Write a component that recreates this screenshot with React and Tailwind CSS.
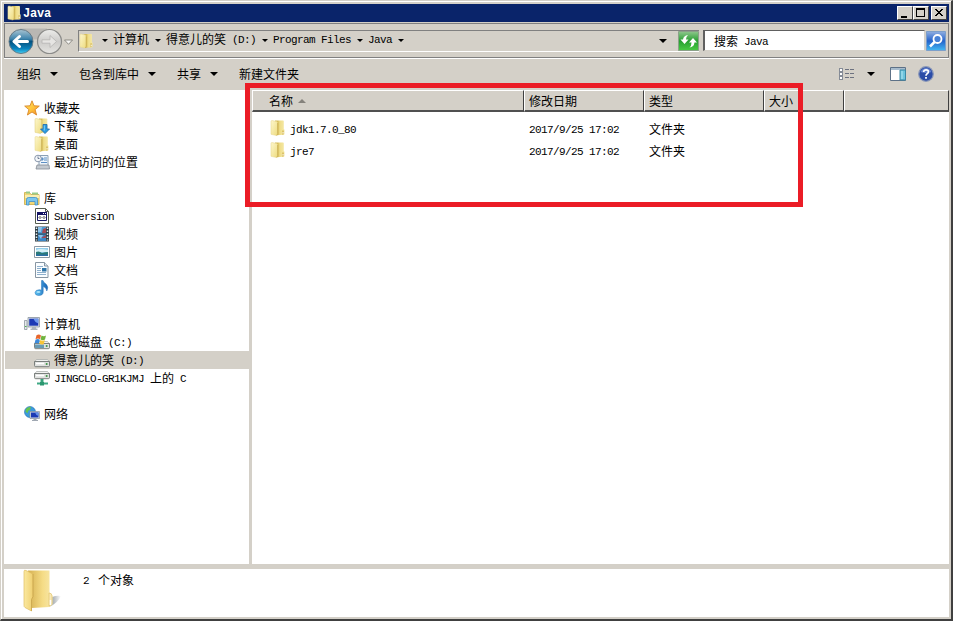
import clsx from "clsx"

// Latin runs use a fixed 6px advance, CJK glyphs use 12px
const Label = ({ children, className }) => (
  <span className={clsx("whitespace-pre", className)}>
    {children.split(/([\x20-\x7e]+)/).filter(Boolean).map((part, i) =>
      /^[\x20-\x7e]/.test(part) ? (
        <span
          key={i}
          className="relative -top-px leading-none font-['Liberation_Mono',monospace] text-[11px] tracking-[-0.6px]"
        >
          {part}
        </span>
      ) : (
        <span key={i}>{part}</span>
      )
    )}
  </span>
)

const Arrow = ({ className = "w-[7px] h-1" }) => (
  <svg viewBox="0 0 8 4" preserveAspectRatio="none" className={clsx("shrink-0", className)}>
    <path d="M0 0h8L4 4z" fill="#000" />
  </svg>
)

const Folder = ({ className = "w-4 h-4" }) => (
  <svg viewBox="0 0 16 16" className={clsx("shrink-0", className)}>
    <defs>
      <linearGradient id="folderFront" x1="0" x2="1" y2="1">
        <stop offset="0" stopColor="#fdf7cd" />
        <stop offset="1" stopColor="#eedc80" />
      </linearGradient>
      <linearGradient id="folderBack" x1="0" x2="1">
        <stop offset="0" stopColor="#d6bd5a" />
        <stop offset="0.3" stopColor="#d6bd5a" />
        <stop offset="0.5" stopColor="#efdd88" />
        <stop offset="1" stopColor="#f5e9a8" />
      </linearGradient>
    </defs>
    <path d="M5 .5h8q.8 0 .8.8V9l.7.8v4.400l-1 .6-7 .4z" fill="url(#folderBack)" />
    <path d="M1 1.500Q1 .5 2 .5l4.500 1q1 .3 1 1.500v11l-1 1.500L1 14.300z" fill="url(#folderFront)" stroke="#e6d58b" strokeWidth="0.5" />
    <path d="M7.700 3v10.500l-.9 2" fill="none" stroke="#c4a74a" strokeWidth="0.7" />
    <path d="M12 10.500h2v3.700l-2 .5z" fill="#dcc368" />
    <path d="M12.600 12h.9v1.500h-.9z" fill="#fff" />
  </svg>
)

const BigFolder = () => (
  <svg viewBox="0 0 40 44" className="w-10 h-11 shrink-0">
    <defs>
      <linearGradient id="bigFront" x1="0" x2="1">
        <stop offset="0" stopColor="#fbe9a0" />
        <stop offset="1" stopColor="#efcf70" />
      </linearGradient>
      <linearGradient id="bigBack" x1="0" x2="1">
        <stop offset="0" stopColor="#d5b050" />
        <stop offset="0.6" stopColor="#f5dc86" />
        <stop offset="1" stopColor="#f8e8ab" />
      </linearGradient>
      <linearGradient id="bigShadow" x1="0" x2="1">
        <stop offset="0" stopColor="#7f878c" />
        <stop offset="0.6" stopColor="#b3b9bd" />
        <stop offset="1" stopColor="#fff" />
      </linearGradient>
    </defs>
    <path d="M20 38L29 28q5-2 9-1-3 7-12 11z" fill="url(#bigShadow)" />
    <path d="M5 1.500h21.500v22l3 3v9l-3 2.500-18 1z" fill="url(#bigBack)" />
    <path d="M1 2.500q0-2 2-1l6 3q1 .5 1 2V28l-1.500 3v11L2 38.500q-1-.5-1-2z" fill="url(#bigFront)" stroke="#dfbd62" strokeWidth="0.7" />
    <path d="M10 5v22.500l-1.500 3V42" fill="none" stroke="#c9a64e" strokeWidth="0.8" />
    <path d="M26 24q3 0 3 3v8l-3 2z" fill="#f9e9b6" stroke="#dfc067" strokeWidth="0.6" />
    <path d="M27.500 31v5" stroke="#fff" strokeWidth="1.500" />
  </svg>
)

const Star = () => (
  <svg viewBox="0 0 16 16" className="w-4 h-4">
    <defs>
      <linearGradient id="star" x1="0" x2="1" y2="1">
        <stop offset="0" stopColor="#ffe45e" />
        <stop offset="0.5" stopColor="#ffc53d" />
        <stop offset="1" stopColor="#f58b25" />
      </linearGradient>
    </defs>
    <path d="M8 .8l2 5 5.300.3-4.200 3.500 1.500 5.400L8 12l-4.600 3 1.500-5.400L.7 6.100 6 5.800z" fill="url(#star)" stroke="#d8872b" strokeWidth="0.9" />
  </svg>
)

const Download = () => (
  <svg viewBox="0 0 16 16" className="w-4 h-4">
    <path d="M5 .5h7.500q.8 0 .8.8V14l-7 1z" fill="url(#folderBack)" />
    <path d="M1 1.500Q1 .5 2 .5l4.500 1q1 .3 1 1.500v11l-1 1.500L1 14.300z" fill="url(#folderFront)" stroke="#dfcb77" strokeWidth="0.5" />
    <path d="M9 6.500h4V11h2.500L11 15.600 6.500 11H9z" fill="#2c9be0" stroke="#1c68a9" strokeWidth="0.8" />
    <path d="M10.300 7.500v5" stroke="#83d2f7" />
  </svg>
)

const Recent = () => (
  <svg viewBox="0 0 16 16" className="w-4 h-4">
    <path d="M5 1.500h9v10H5z" fill="#eef5fb" stroke="#8aa0b5" />
    <path d="M7 4h2v2H7zM10 4h3M10 6h3M7 8.500h6" fill="#5d9dd6" stroke="#5d8fc4" />
    <path d="M3 11h12l.5 4H2z" fill="#c3c9cf" stroke="#848c94" strokeWidth="0.8" />
    <circle cx="4" cy="4.500" r="3.300" fill="#f4f7fa" stroke="#8a98ac" />
    <path d="M4 2.500v2h1.500" fill="none" stroke="#4f617d" strokeWidth="0.8" />
  </svg>
)

const Library = () => (
  <svg viewBox="0 0 16 16" className="w-4 h-4">
    <path d="M.5 2.500h5l1.500 2H15v10H.5z" fill="#f1d978" stroke="#d5b75c" />
    <path d="M2 1.500h4v2H2zM8 2.500h6v2H8z" fill="#99ca88" />
    <path d="M1 5h14v3H1z" fill="#faeeb0" />
    <path d="M2.500 15V9.500q0-2 2-2h7q2 0 2 2V15H11v-3.500H5V15z" fill="#7cc6ee" stroke="#3d8fc9" strokeWidth="0.8" />
  </svg>
)

const Subversion = () => (
  <svg viewBox="0 0 16 16" className="w-4 h-4">
    <path d="M1.500.5h10l3 3v12h-13z" fill="#fff" stroke="#555d4e" />
    <path d="M11.500.5v3h3" fill="none" stroke="#555" />
    <path d="M3.500 4.500h9v8h-9z" fill="#fff" stroke="#151563" />
    <path d="M3 4h10v3H3z" fill="#151563" />
    <path d="M9 5h1v1H9zM11 5h1v1h-1z" fill="#fff" />
    <path d="M5 9.500l1-1 1 1-1 1zM9 9.500l1-1 1 1-1 1z" fill="none" stroke="#222" strokeWidth="0.9" />
  </svg>
)

const Video = () => (
  <svg viewBox="0 0 16 16" className="w-4 h-4">
    <path d="M1 .5h14v15H1z" fill="#2e3c45" />
    <path d="M4 1h8v6.500H4z" fill="#4c9dd6" />
    <path d="M4 8.500h8V15H4z" fill="#3d87c6" />
    <path d="M4 1h4l-1 5H4zM4 9h5l-2 4z" fill="#8fc4ea" />
    <path d="M9 3l3-1v5H8zM7 12l5-3v3z" fill="#a44a55" />
    <path d="M2.500 1.500v13M13.500 1.500v13" stroke="#e4eff1" strokeWidth="1.500" strokeDasharray="1.500 1.500" />
  </svg>
)

const Picture = () => (
  <svg viewBox="0 0 16 16" className="w-4 h-4">
    <path d="M.5 2.500h15v11H.5z" fill="#fff" stroke="#8b98a3" />
    <path d="M2 4h12v8H2z" fill="#91cdec" />
    <path d="M2 6q4-2 12 0v2H2z" fill="#d5eff5" />
    <path d="M2 8q3-1.500 6 1 3-1 6-1v4H2z" fill="#2b7b79" />
    <path d="M2 10.500h12V12H2z" fill="#2c6fa5" />
  </svg>
)

const Document = () => (
  <svg viewBox="0 0 16 16" className="w-4 h-4">
    <path d="M1.500.5h9l3.500 3.500v11.500H1.500z" fill="#fafdff" stroke="#8896a3" />
    <path d="M10.500.5V4H14" fill="#dbe5ee" stroke="#8896a3" />
    <path d="M3 4.500h6M3 6.500h4M3 8.500h4M3 10.500h9M3 12.500h9" stroke="#8fb0cd" />
    <path d="M8 6h4.500v3.500H8z" fill="#2f75a8" />
  </svg>
)

const Music = () => (
  <svg viewBox="0 0 16 16" className="w-4 h-4">
    <defs>
      <linearGradient id="note" x1="0" x2="1">
        <stop offset="0" stopColor="#5fc4f3" />
        <stop offset="1" stopColor="#1762b4" />
      </linearGradient>
    </defs>
    <path d="M7.500.5H9q.5 2 3 3.500 3 3 .8 7-.3-3.500-3.600-4.500V12q0 3.500-4.700 3.500Q1 15.200 1 12.700q.4-3 4.500-3 1.200 0 2 .5z" fill="url(#note)" stroke="#2271b8" strokeWidth="0.5" />
    <ellipse cx="4.500" cy="12" rx="2" ry="1.100" fill="#a6e1fa" />
  </svg>
)

const Computer = () => (
  <svg viewBox="0 0 16 16" className="w-4 h-4">
    <path d="M.5 4.500h2.500v9H.5z" fill="#e5e9ec" stroke="#8d979e" strokeWidth="0.8" />
    <path d="M1 10h1.500v1H1z" fill="#4bb34b" />
    <path d="M4 1.500h11.500v9.500H4z" fill="#d9dfe6" stroke="#8a949e" strokeWidth="0.8" />
    <path d="M5.200 2.700h9.100v7H5.200z" fill="#1c39b5" />
    <path d="M9.500 2.700h4.800v4.500q-3-.5-4.800-4.500z" fill="#6e99ed" />
    <path d="M8 11h4v1.500h1.500V14h-7v-1.500H8z" fill="#adb5bd" />
  </svg>
)

const DriveBody = () => (
  <>
    <path d="M2.500 7.500h11l2 2.500H.5z" fill="#f1f2f1" stroke="#a4a7a5" strokeWidth="0.7" />
    <path d="M.5 9.500h15v4q0 1.200-1.200 1.200H1.700Q.5 14.700.5 13.500z" fill="#dfe1df" stroke="#6f7573" strokeWidth="0.9" />
    <path d="M2 11.500h8" stroke="#fff" strokeWidth="1.500" />
    <path d="M11.800 11h1.700v2h-1.700z" fill="#4a9a53" />
  </>
)

const SystemDrive = () => (
  <svg viewBox="0 0 16 16" className="w-4 h-4">
    <DriveBody />
    <path d="M1 10.500h9v3.500H1z" fill="#699bb4" />
    <path d="M2.500 1.200q2.500-1.500 4.500.2L6 5.200q-2-1.200-4.500 0z" fill="#e8662c" />
    <path d="M7.500 1.600q2.500 1.500 4.500 0L11 5.600q-2 1.200-4.500 0z" fill="#70b33e" />
    <path d="M1.500 5.700q2.500-1.200 4.300 0L5 9.500q-2-1.200-4.500 0z" fill="#3c8bdc" />
    <path d="M6.300 6q2.500 1.400 4.500.1L9.800 10q-2 1.200-4.500-.2z" fill="#f9c536" />
  </svg>
)

const Drive = () => (
  <svg viewBox="0 0 16 16" className="w-4 h-4"><DriveBody /></svg>
)

const NetDrive = () => (
  <svg viewBox="0 0 16 16" className="w-4 h-4">
    <g transform="translate(0 -6)"><DriveBody /></g>
    <path d="M8 9v4" stroke="#36a37b" strokeWidth="3" />
    <path d="M3 13.500h11" stroke="#3fa985" strokeWidth="2" />
    <path d="M6 12h4v3.500H6z" fill="#2b9770" />
  </svg>
)

const Network = () => (
  <svg viewBox="0 0 16 16" className="w-4 h-4">
    <circle cx="6" cy="6" r="5.500" fill="#3b9bdc" stroke="#236dae" strokeWidth="0.6" />
    <path d="M2 3q2-2.500 5-2L6 4 4 5v2L1.500 6zM5 8l3 1-1 2.500z" fill="#65c54f" />
    <path d="M6 5.500h9.500v7H6z" fill="#dce1e7" stroke="#848f9b" strokeWidth="0.7" />
    <path d="M7 6.500h7.500v5H7z" fill="#1b3ab4" />
    <path d="M11 6.500h3.500V10q-2.500-.5-3.500-3.500z" fill="#628fe8" />
    <path d="M9.500 12.500h3v1.500H14v1H8v-1h1.500z" fill="#a0a8b2" />
  </svg>
)

const groups = [
  { name: "收藏夹", icon: Star, items: [
    { name: "下载", icon: Download },
    { name: "桌面", icon: Folder },
    { name: "最近访问的位置", icon: Recent },
  ] },
  { name: "库", icon: Library, items: [
    { name: "Subversion", icon: Subversion },
    { name: "视频", icon: Video },
    { name: "图片", icon: Picture },
    { name: "文档", icon: Document },
    { name: "音乐", icon: Music },
  ] },
  { name: "计算机", icon: Computer, items: [
    { name: "本地磁盘 (C:)", icon: SystemDrive },
    { name: "得意儿的笑 (D:)", icon: Drive, selected: true },
    { name: "JINGCLO-GR1KJMJ 上的 C", icon: NetDrive },
  ] },
  { name: "网络", icon: Network, items: [] },
]

const files = [
  { name: "jdk1.7.0_80", date: "2017/9/25 17:02", type: "文件夹" },
  { name: "jre7", date: "2017/9/25 17:02", type: "文件夹" },
]

const crumbs = ["计算机", "得意儿的笑 (D:)", "Program Files", "Java"]

const WindowButton = ({ children, className }) => (
  <div className={clsx("w-4 h-[14px] bg-[#d4d0c8] border border-t-white border-l-white border-r-[#404040] border-b-[#404040]", className)}>
    <svg viewBox="0 0 14 12" className="w-[14px] h-3 block" shapeRendering="crispEdges">{children}</svg>
  </div>
)

const TitleBar = () => (
  <div className="h-[18px] bg-[#0a246a] flex items-center pl-[3px] pr-[2px]">
    <Folder className="w-[15px] h-4" />
    <span className="ml-px mt-[2px] flex-1 text-white font-bold text-[12px] tracking-[-0.2px] leading-none font-['Liberation_Mono',monospace]">Java</span>
    <WindowButton><path d="M3 9h6v2H3z" /></WindowButton>
    <WindowButton><path d="M2 1h9v9H2zM3 3v6h7V3z" fillRule="evenodd" /></WindowButton>
    <WindowButton className="ml-[2px]">
      <path d="M3 2h2v1h1v1h2V3h1V2h2v1h-1v1H9v1H8v1h1v1h1v1h1v1H9V8H8V7H6v1H5v1H3V8h1V7h1V6h1V5H5V4H4V3H3z" />
    </WindowButton>
  </div>
)

const NavButtons = () => (
  <svg viewBox="0 0 70 28" className="w-[70px] h-7 shrink-0">
    <defs>
      <linearGradient id="back" x1="0" y1="0" x2="0" y2="1">
        <stop offset="0" stopColor="#a9c4d2" />
        <stop offset="0.4" stopColor="#3d83ac" />
        <stop offset="0.5" stopColor="#06517e" />
        <stop offset="0.8" stopColor="#0a83bd" />
        <stop offset="1" stopColor="#42d0f5" />
      </linearGradient>
      <linearGradient id="fwd" x1="0" y1="0" x2="0" y2="1">
        <stop offset="0" stopColor="#ededeb" />
        <stop offset="0.5" stopColor="#cccbc9" />
        <stop offset="1" stopColor="#e5e4e1" />
      </linearGradient>
    </defs>
    <path d="M15 1.500h27v7q-11 8-27 0z" fill="#b9b7b3" />
    <circle cx="16" cy="14.500" r="12" fill="url(#back)" stroke="#667a86" />
    <path d="M9 14.500l5.500-5M9 14.500l5.500 5M10 14.500h12.500" fill="none" stroke="#fff" strokeWidth="3" strokeLinecap="round" />
    <circle cx="44.500" cy="14.500" r="12" fill="url(#fwd)" stroke="#8b8b89" strokeWidth="1.200" />
    <path d="M51.500 14.500l-6.500-6v4.300h-8v3.400h8v4.300z" fill="#e6e5e3" stroke="#b5b4b2" strokeWidth="0.8" />
    <path d="M59.500 13h8L63.500 17.300z" fill="#f6f6f4" stroke="#83817c" strokeWidth="0.9" />
  </svg>
)

const NavBar = () => (
  <div className="h-[35px] mt-px border border-[#808080] flex items-center pr-[2px]">
    <NavButtons />
    <div className="ml-[3px] w-[621px] h-[22px] border-t border-l border-[#808080] border-b border-b-white flex items-center">
      <Folder className="w-[15px] h-4" />
      <div className="flex items-center flex-1 pl-[8px]">
        <Arrow className="w-[6px] h-[3px]" />
        {crumbs.map((crumb) => (
          <div key={crumb} className="flex items-center pl-[5px]">
            <Label className="leading-4 mb-[3px]">{crumb}</Label>
            <Arrow className="w-[6px] h-[3px] ml-[6px]" />
          </div>
        ))}
      </div>
      <Arrow className="w-[8px] h-1 mr-[11px]" />
      <svg viewBox="0 0 21 20" className="w-[21px] h-5">
        <defs>
          <linearGradient id="refresh" x1="0" y1="0" x2="0" y2="1">
            <stop offset="0" stopColor="#8fc78d" />
            <stop offset="0.5" stopColor="#279f31" />
            <stop offset="1" stopColor="#49cb43" />
          </linearGradient>
        </defs>
        <path d="M.5.5h20v19H.5z" fill="url(#refresh)" stroke="#8aa188" />
        <path d="M10 4Q5.500 4.500 5 8.500H2.500l4 4.500 4-4.500H8Q8 5.500 10 4zM11.500 16.500q4.500-.5 5-5H19l-4-4.500-4 4.500h2.500q0 3.500-2 5z" fill="#fff" />
      </svg>
    </div>
    <div className="ml-[4px] w-[222px] h-[21px] bg-white border-t border-l-2 border-[#606060] border-b border-r border-b-[#d4d0c8] border-r-[#d4d0c8] flex items-center pl-[9px]">
      <Label className="leading-4">搜索 Java</Label>
    </div>
    <svg viewBox="0 0 20 20" className="ml-px w-5 h-5">
      <defs>
        <linearGradient id="search" x1="0" y1="0" x2="0" y2="1">
          <stop offset="0" stopColor="#91afe1" />
          <stop offset="0.5" stopColor="#2463cb" />
          <stop offset="1" stopColor="#43b9f2" />
        </linearGradient>
      </defs>
      <path d="M.5.5h19v19H.5z" fill="url(#search)" stroke="#7c9fca" />
      <circle cx="11.500" cy="8" r="4" fill="#4882d6" stroke="#fff" strokeWidth="1.800" />
      <path d="M8.500 11l-4.500 4.500" stroke="#fff" strokeWidth="2.500" />
    </svg>
  </div>
)

const Toolbar = () => (
  <div className="h-8 flex items-center pl-[13px] pr-[15px] pb-[2px] border-t border-white">
    <Label>组织</Label>
    <Arrow className="w-[8px] h-1 ml-[9px]" />
    <Label className="ml-[21px]">包含到库中</Label>
    <Arrow className="w-[8px] h-1 ml-[9px]" />
    <Label className="ml-[21px]">共享</Label>
    <Arrow className="w-[8px] h-1 ml-[9px]" />
    <Label className="ml-[21px] flex-1">新建文件夹</Label>
    <svg viewBox="0 0 16 12" className="w-4 h-3" shapeRendering="crispEdges">
      <path d="M.5.5h3v3h-3zM.5 4.500h3v3h-3zM.5 8.500h3v3h-3z" fill="#fff" stroke="#858b96" />
      <path d="M6 1.500h4M11 1.500h4M6 5.500h4M11 5.500h4M6 9.500h4M11 9.500h4" stroke="#6d7280" />
    </svg>
    <Arrow className="w-[8px] h-1 ml-[12px]" />
    <svg viewBox="0 0 16 14" className="w-4 h-[14px] ml-[15px]">
      <path d="M.5.5h15v13H.5z" fill="#fff" stroke="#5d7187" />
      <path d="M1 1h14v2H1z" fill="#a8bccd" />
      <path d="M10 3h5.500v10H10z" fill="#6dc4dd" stroke="#3b89a5" />
      <path d="M12 4v8" stroke="#b6e7f3" />
    </svg>
    <svg viewBox="0 0 16 16" className="w-4 h-4 ml-[12px]">
      <circle cx="8" cy="8" r="7.300" fill="#2c4da7" stroke="#8b98b8" strokeWidth="1.200" />
      <path d="M2.500 6q2-4 5.500-4t5.500 4q-5 2-11 0z" fill="#6684cf" />
      <path d="M5.600 6q.2-2.200 2.500-2.200 2.300 0 2.300 2 0 1.200-1.300 2Q8 8.500 8 9.800" fill="none" stroke="#fff" strokeWidth="1.700" />
      <path d="M7.100 11h1.800v1.700H7.100z" fill="#fff" />
    </svg>
  </div>
)

const Sidebar = () => (
  <div className="w-[245px] shrink-0 bg-white pt-[9px] pl-px flex flex-col gap-[18px]">
    {groups.map((group) => (
      <div key={group.name}>
        <div className="h-[18px] flex items-center pl-[19px] gap-1">
          <group.icon />
          <Label>{group.name}</Label>
        </div>
        {group.items.map((item) => (
          <div key={item.name} className={clsx("h-[18px] flex items-center pl-[29px] gap-1", item.selected && "bg-[#d4d0c8]")}>
            <item.icon />
            <Label>{item.name}</Label>
          </div>
        ))}
      </div>
    ))}
  </div>
)

const HeaderCell = ({ className, children }) => (
  <div className={clsx("h-[22px] flex items-center border-t border-l border-t-white border-l-white border-r border-b-2 border-r-[#404040] border-b-[#505050]", className)}>
    {children}
  </div>
)

const FileList = () => (
  <div className="flex-1 bg-white">
    <div className="flex bg-[#d4d0c8]">
      <HeaderCell className="w-[272px] pl-[16px]">
        <Label>名称</Label>
        <svg viewBox="0 0 8 4" className="w-2 h-1 ml-[5px]"><path d="M4 0l4 4H0z" fill="#85827c" /></svg>
      </HeaderCell>
      <HeaderCell className="w-[120px] pl-[4px]"><Label>修改日期</Label></HeaderCell>
      <HeaderCell className="w-[120px] pl-[4px]"><Label>类型</Label></HeaderCell>
      <HeaderCell className="w-[80px] pl-[4px]"><Label>大小</Label></HeaderCell>
      <HeaderCell className="flex-1" />
    </div>
    <div className="pt-[6px]">
      {files.map((file) => (
        <div key={file.name} className="h-[22px] flex items-center pl-[18px]">
          <Folder className="w-4 h-4 mt-[-2px]" />
          <Label className="w-[243px] pl-1">{file.name}</Label>
          <Label className="w-[120px]">{file.date}</Label>
          <Label>{file.type}</Label>
        </div>
      ))}
    </div>
  </div>
)

const App = () => {
  return (
    <div className="relative w-[953px] h-[621px] overflow-hidden bg-[#d4d0c8] text-black text-[12px] leading-[18px] font-['Noto_Sans_CJK_SC',sans-serif]">
      <div className="h-full border-t border-l border-[#d4d0c8] border-r-2 border-b-2 border-r-[#404040] border-b-[#404040]">
        <div className="h-full border-t border-l border-white pt-[2px] pl-[2px] pr-[2px] pb-[2px] flex flex-col">
          <TitleBar />
          <NavBar />
          <Toolbar />
          <div className="h-[474px] flex">
            <Sidebar />
            <div className="w-[3px] bg-[#d4d0c8]" />
            <FileList />
          </div>
          <div className="mt-[5px] flex-1 bg-white flex items-start pl-[19px]">
            <BigFolder />
            <div className="pl-5 pt-[2px] flex gap-[9px]">
              <Label>2</Label>
              <Label>个对象</Label>
            </div>
          </div>
        </div>
      </div>
      {/* red marker around the file list */}
      <div className="absolute left-[245px] top-[83px] w-[558px] h-[124px] border-5 border-[#eb1c26] pointer-events-none" />
    </div>
  )
}

export default App
